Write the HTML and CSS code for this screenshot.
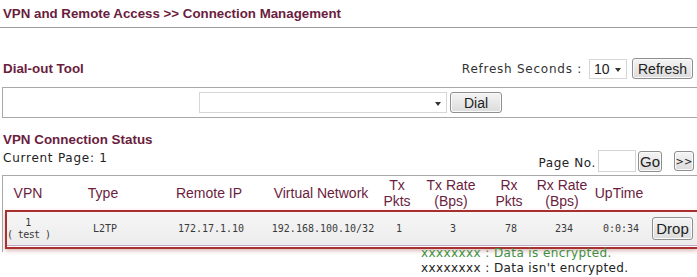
FILE: index.html
```html
<!DOCTYPE html>
<html>
<head>
<meta charset="utf-8">
<link rel="stylesheet" href="styles.css">
</head>
<body>
<div class="title">VPN and Remote Access &gt;&gt; Connection Management</div>

<div class="toolbar">
  <div class="section-label">Dial-out Tool</div>
  <div class="refresh">
    <span class="refresh-label">Refresh Seconds :</span>
    <div class="select small-select"><span>10</span><i class="arrow"></i></div>
    <button class="btn btn-refresh">Refresh</button>
  </div>
</div>

<div class="dial-box">
  <div class="select dial-select"><span></span><i class="arrow"></i></div>
  <button class="btn btn-dial">Dial</button>
</div>

<div class="section-label status-label">VPN Connection Status</div>
<div class="pager">
  <div class="current">Current Page: 1</div>
  <div class="page-ctrl">
    <span class="page-no">Page No.</span>
    <div class="page-input"></div>
    <button class="btn btn-go">Go</button>
    <button class="btn btn-next">&gt;&gt;</button>
  </div>
</div>

<div class="table-wrap">
  <div class="row head">
    <div class="c c1">VPN</div>
    <div class="c c2">Type</div>
    <div class="c c3">Remote IP</div>
    <div class="c c4">Virtual Network</div>
    <div class="c c5">Tx<br>Pkts</div>
    <div class="c c6">Tx Rate<br>(Bps)</div>
    <div class="c c7">Rx<br>Pkts</div>
    <div class="c c8">Rx Rate<br>(Bps)</div>
    <div class="c c9">UpTime</div>
    <div class="c c10"></div>
  </div>
  <div class="data-box">
    <div class="row data">
      <div class="c c1 vpn-id">1<br>( test )</div>
      <div class="c c2">L2TP</div>
      <div class="c c3">172.17.1.10</div>
      <div class="c c4">192.168.100.10/32</div>
      <div class="c c5">1</div>
      <div class="c c6">3</div>
      <div class="c c7">78</div>
      <div class="c c8">234</div>
      <div class="c c9">0:0:34</div>
      <div class="c c10"><button class="btn btn-drop">Drop</button></div>
    </div>
  </div>
</div>

<div class="legend">
  <div class="enc">xxxxxxxx : Data is encrypted.</div>
  <div class="noenc">xxxxxxxx : Data isn't encrypted.</div>
</div>
</body>
</html>
```

FILE: styles.css
```css
html, body {
  margin: 0;
  padding: 0;
  background: #fff;
  width: 697px;
  overflow: hidden;
}
body {
  font-family: "DejaVu Sans", Verdana, sans-serif;
  font-size: 12px;
  color: #222;
}
.title {
  font-family: "Liberation Sans", Arial, sans-serif;
  font-weight: bold;
  font-size: 13.3px;
  color: #6b1d3e;
  padding: 6px 0 0 3px;
  height: 21px;
  border-bottom: 1px solid #9a9a9a;
}
.toolbar {
  display: flex;
  justify-content: space-between;
  align-items: flex-end;
  margin-top: 30px;
  height: 25px;
}
.section-label {
  font-family: "Liberation Sans", Arial, sans-serif;
  font-weight: bold;
  font-size: 13.4px;
  color: #6b1d3e;
  padding-left: 3px;
}
.toolbar .section-label {
  align-self: flex-start;
  padding-top: 3px;
}
.refresh {
  display: flex;
  align-items: center;
  padding-right: 4px;
  padding-bottom: 4px;
}
.refresh-label {
  color: #333;
  margin-right: 7px;
  letter-spacing: 0.75px;
}
.select {
  position: relative;
  background: #fff;
  border: 1px solid #d6d6d6;
  box-sizing: border-box;
  font-family: "Liberation Sans", Arial, sans-serif;
  font-size: 14px;
  color: #222;
}
.select span {
  padding-left: 4px;
}
.arrow {
  position: absolute;
  right: 5px;
  top: 50%;
  margin-top: -1px;
  width: 0;
  height: 0;
  border-left: 3.5px solid transparent;
  border-right: 3.5px solid transparent;
  border-top: 4px solid #333;
}
.small-select {
  width: 38px;
  height: 20px;
  line-height: 18px;
  margin-right: 5px;
}
.btn {
  font-family: "Liberation Sans", Arial, sans-serif;
  font-size: 14px;
  color: #222;
  background: linear-gradient(#f4f4f4, #dcdcdc);
  border: 1px solid #8f8f8f;
  border-radius: 3px;
  padding: 0;
  box-sizing: border-box;
  box-shadow: inset 0 0 0 1px #fafafa;
}
.btn-refresh {
  width: 61px;
  height: 21px;
}
.dial-box {
  margin: 4px 0 0 2px;
  height: 31px;
  border: 1px solid #a8a8a8;
  border-right: none;
  display: flex;
  align-items: center;
  box-sizing: border-box;
  padding-left: 196px;
}
.dial-select {
  width: 248px;
  height: 21px;
  margin-right: 3px;
}
.btn-dial {
  width: 52px;
  height: 21px;
}
.status-label {
  margin-top: 14px;
  line-height: 15px;
}
.pager {
  display: flex;
  justify-content: space-between;
  height: 28px;
}
.current {
  padding: 4px 0 0 3px;
  color: #222;
  letter-spacing: 0.75px;
}
.page-ctrl {
  display: flex;
  align-items: center;
  align-self: flex-end;
  padding-right: 3px;
  padding-bottom: 3px;
}
.page-no {
  margin-right: 2px;
  margin-top: 4px;
  color: #222;
  letter-spacing: 0.6px;
}
.page-input {
  width: 38px;
  height: 22px;
  border: 1px solid #d4d4d4;
  box-sizing: border-box;
  margin-right: 2px;
}
.btn-go {
  width: 24px;
  height: 21px;
  font-size: 15px;
  margin-right: 12px;
}
.btn-next {
  width: 20px;
  height: 20px;
  font-size: 10px;
  font-family: "DejaVu Sans", Verdana, sans-serif;
}
.table-wrap {
  margin-left: 2px;
  border-top: 1px solid #a8a8a8;
  border-left: 1px solid #a8a8a8;
  height: 76px;
}
.row {
  display: flex;
  align-items: center;
}
.c {
  text-align: center;
  flex: none;
  white-space: nowrap;
}
.c1 { width: 46px; }
.c2 { width: 104px; }
.c3 { width: 108px; }
.c4 { width: 116px; }
.c5 { width: 36px; }
.c6 { width: 72px; }
.c7 { width: 44px; }
.c8 { width: 62px; }
.c9 { width: 52px; }
.c10 { width: 52px; }
.head {
  height: 34px;
  padding-left: 2px;
  font-family: "Liberation Sans", Arial, sans-serif;
  font-size: 14px;
  line-height: 16px;
  color: #6b1d3e;
}
.data-box {
  margin-left: 2px;
  border: 2px solid #a8302e;
  border-right: none;
  box-shadow: 0 2px 4px rgba(160, 60, 60, 0.35);
  height: 39px;
  box-sizing: border-box;
}
.data {
  height: 33px;
  background: linear-gradient(#f6f6f6, #ececec);
  border-bottom: 1px solid #c4a8c8;
  font-family: "DejaVu Sans Mono", monospace;
  font-size: 10px;
  color: #3a3a3a;
}
.vpn-id {
  line-height: 12px;
  font-size: 10px;
  letter-spacing: -0.6px;
  padding-right: 4px;
  box-sizing: border-box;
}
.c10 {
  display: flex;
  justify-content: flex-start;
}
.btn-drop {
  width: 41px;
  height: 23px;
  margin-left: 5px;
  font-size: 15px;
}
.legend {
  padding-left: 421px;
  margin-top: -6px;
  font-size: 12px;
  letter-spacing: 0.4px;
  line-height: 15px;
}
.enc { color: #3d8f3d; }
.noenc { color: #222; }
```
